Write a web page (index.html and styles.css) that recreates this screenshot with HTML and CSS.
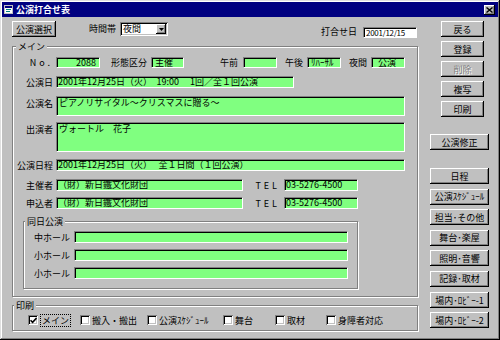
FILE: index.html
```html
<!DOCTYPE html>
<html lang="ja">
<head>
<meta charset="utf-8">
<title>公演打合せ表</title>
<link rel="stylesheet" href="styles.css">
</head>
<body>
<div class="window">
  <div class="titlebar">
    <svg class="title-icon" width="9" height="9" viewBox="0 0 9 9"><rect x="0.5" y="0.5" width="8" height="8" fill="#fff" stroke="#c0c0c0"/><rect x="1" y="1" width="7" height="2" fill="#000080"/><rect x="2" y="4" width="5" height="1" fill="#008080"/><rect x="2" y="6" width="4" height="1" fill="#008080"/></svg>
    <span class="title">公演打合せ表</span>
    <span class="close"><svg width="7" height="6" viewBox="0 0 7 6"><path d="M0.5 0.5L6.5 5.5M6.5 0.5L0.5 5.5" stroke="#000" stroke-width="1.4"/></svg></span>
  </div>
  <div class="client">
    <div class="left">
      <div class="toprow">
        <div class="btn btn-sel">公演選択</div>
        <span class="tlabel">時間帯</span>
        <div class="select"><span class="sel-text">夜間</span><span class="sel-btn"><svg width="5" height="3" viewBox="0 0 5 3"><path d="M0 0H5L2.5 3Z" fill="#000"/></svg></span></div>
        <span class="dlabel">打合せ日</span>
        <div class="datein">2001/12/15</div>
      </div>

      <fieldset class="group main">
        <legend>メイン</legend>
        <div class="row r-a">
          <span class="lab sp">No.</span>
          <div class="f w44 ar">2088</div>
          <span class="lab2 w51">形態区分</span>
          <div class="f w33 pl3">主催</div>
          <span class="lab2 w59">午前</span>
          <div class="f w34"></div>
          <span class="lab2 w30">午後</span>
          <div class="f w34 pl3">ﾘﾊｰｻﾙ</div>
          <span class="lab2 w30">夜間</span>
          <div class="f w34 pl6">公演</div>
        </div>
        <div class="row r-b">
          <span class="lab">公演日</span>
          <div class="f w238 h12">2001年12月25日（火）　19:00　 1回／全１回公演</div>
        </div>
        <div class="row top r-c">
          <span class="lab pt">公演名</span>
          <div class="f w349 h20 pl2">ピアノリサイタル～クリスマスに贈る～</div>
        </div>
        <div class="row top r-d">
          <span class="lab pt">出演者</span>
          <div class="f w349 h30 pl2">ヴォートル　花子</div>
        </div>
        <div class="row r-e">
          <span class="lab">公演日程</span>
          <div class="f w349 h12">2001年12月25日（火）　 全１日間（１回公演）</div>
        </div>
        <div class="row r-f">
          <span class="lab">主催者</span>
          <div class="f w187 h12">（財）新日鐵文化財団</div>
          <span class="lab2 w41 sp">TEL</span>
          <div class="f w74 h12">03-5276-4500</div>
        </div>
        <div class="row r-g">
          <span class="lab">申込者</span>
          <div class="f w187 h12">（財）新日鐵文化財団</div>
          <span class="lab2 w41 sp">TEL</span>
          <div class="f w74 h12">03-5276-4500</div>
        </div>

        <fieldset class="group same">
          <legend>同日公演</legend>
          <div class="hrow h1">
            <span class="hlab">中ホール</span>
            <div class="f w274 h12"></div>
          </div>
          <div class="hrow">
            <span class="hlab">小ホール</span>
            <div class="f w274 h12"></div>
          </div>
          <div class="hrow">
            <span class="hlab">小ホール</span>
            <div class="f w274 h12"></div>
          </div>
        </fieldset>
      </fieldset>

      <fieldset class="group print">
        <legend>印刷</legend>
        <div class="cbrow">
          <div class="cb"><span class="box"><svg width="7" height="7" viewBox="0 0 7 7"><path d="M0.5 3.2L2.6 5.4L6.5 1" fill="none" stroke="#000" stroke-width="1.6"/></svg></span><span class="focus">メイン</span></div>
          <div class="cb"><span class="box"></span><span>搬入・搬出</span></div>
          <div class="cb"><span class="box"></span><span>公演ｽｹｼﾞｭｰﾙ</span></div>
          <div class="cb"><span class="box"></span><span>舞台</span></div>
          <div class="cb"><span class="box"></span><span>取材</span></div>
          <div class="cb"><span class="box"></span><span>身障者対応</span></div>
        </div>
      </fieldset>
    </div>

    <div class="side">
      <div class="btn btn-n">戻る</div>
      <div class="btn btn-n g1">登録</div>
      <div class="btn btn-n g1 disabled">削除</div>
      <div class="btn btn-n g1">複写</div>
      <div class="btn btn-n g1">印刷</div>
      <div class="btn btn-w b-shusei">公演修正</div>
      <div class="btn btn-w b-nittei">日程</div>
      <div class="btn btn-w g2">公演ｽｹｼﾞｭｰﾙ</div>
      <div class="btn btn-w g2">担当･その他</div>
      <div class="btn btn-w g2">舞台･楽屋</div>
      <div class="btn btn-w g2">照明･音響</div>
      <div class="btn btn-w g2">記録･取材</div>
      <div class="btn btn-w b-lobby">場内･ﾛﾋﾞｰ-1</div>
      <div class="btn btn-w g1">場内･ﾛﾋﾞｰ-2</div>
    </div>
  </div>
</div>
</body>
</html>
```

FILE: styles.css
```css
* { box-sizing: border-box; }
html, body { margin: 0; padding: 0; }
body {
  width: 500px;
  height: 340px;
  overflow: hidden;
  background: #c0c0c0;
  font-family: "Noto Sans CJK JP", "Noto Sans", sans-serif;
  font-size: 9px;
  line-height: 11px;
  color: #000;
}
.window {
  width: 500px;
  height: 340px;
  padding: 2px;
  background: #c0c0c0;
  box-shadow: inset -1px -1px #000, inset 1px 1px #dfdfdf, inset -2px -2px #808080, inset 2px 2px #fff;
  display: flex;
  flex-direction: column;
}
.titlebar {
  height: 15px;
  flex-shrink: 0;
  background: #000080;
  color: #fff;
  display: flex;
  align-items: center;
  padding-left: 2px;
}
.title-icon { margin-right: 3px; }
.title { font-weight: bold; font-size: 9px; line-height: 11px; }
.close {
  margin-left: auto;
  margin-right: 3px;
  width: 11px;
  height: 10px;
  background: #c0c0c0;
  box-shadow: inset -1px -1px #000, inset 1px 1px #fff, inset -2px -2px #808080;
  display: flex;
  align-items: center;
  justify-content: center;
}
.client { flex: 1; display: flex; }
.left { margin-left: 10px; width: 406px; display: flex; flex-direction: column; }
.side { flex: 1; display: flex; flex-direction: column; align-items: flex-start; padding-top: 4px; }

/* buttons */
.btn {
  height: 16px;
  background: #c0c0c0;
  box-shadow: inset -1px -1px #000, inset 1px 1px #fff, inset -2px -2px #808080;
  display: flex;
  align-items: center;
  justify-content: center;
  white-space: nowrap;
  flex-shrink: 0;
}
.btn.disabled { color: #808080; text-shadow: 1px 1px #fff; }
.btn-sel { width: 44px; }
.btn-n { width: 43px; margin-left: 23px; }
.btn-w { width: 59px; margin-left: 12px; }
.g1 { margin-top: 4px; }
.b-shusei { margin-top: 17px; }
.b-nittei { margin-top: 18px; }
.g2 { margin-top: 4.5px; }
.b-lobby { margin-top: 5.5px; }

/* top row */
.toprow { display: flex; align-items: flex-start; height: 16px; margin-top: 4px; flex-shrink: 0; }
.tlabel { margin-left: 33px; margin-top: 2px; }
.select {
  margin-left: 4px;
  margin-top: 1px;
  width: 48px;
  height: 14px;
  background: #fff;
  box-shadow: inset 1px 1px #808080, inset -1px -1px #fff, inset 2px 2px #000, inset -2px -2px #c0c0c0;
  display: flex;
  align-items: center;
  padding: 2px;
}
.sel-text { flex: 1; padding-left: 1px; line-height: 10px; }
.sel-btn {
  width: 10px;
  height: 10px;
  background: #c0c0c0;
  box-shadow: inset -1px -1px #000, inset 1px 1px #fff, inset -2px -2px #808080;
  display: flex;
  align-items: center;
  justify-content: center;
}
.dlabel { margin-left: auto; margin-top: 5px; margin-right: 6px; }
.datein {
  margin-top: 6px;
  margin-right: 1px;
  width: 54px;
  height: 11px;
  background: #fff;
  border-top: 1px solid #808080;
  border-left: 1px solid #808080;
  border-bottom: 1px solid #fff;
  border-right: 1px solid #fff;
  box-shadow: inset 1px 1px #000;
  padding-left: 2px;
  font-size: 8px;
  letter-spacing: -0.3px;
  line-height: 9px;
  white-space: nowrap;
  overflow: hidden;
}

/* group boxes */
.group {
  margin: 0;
  padding: 0;
  min-width: 0;
  border: 1px solid #808080;
  box-shadow: inset 1px 1px #fff, 1px 1px #fff;
}
.group > legend {
  padding: 0 2px;
  line-height: 11px;
  background: #c0c0c0;
}
.main { margin-top: 4px; width: 406px; padding-bottom: 7px; }
.main > legend { margin-left: 3px; }
.same { margin-top: 7px; margin-left: 10px; width: 335px; padding-bottom: 9px; }
.same > legend { margin-left: 1px; }
.print { margin-top: 3px; width: 406px; padding-bottom: 4px; }
.print > legend { margin-left: 1px; }

/* rows */
.row { display: flex; align-items: center; }
.row.top { align-items: flex-start; }
.r-a { margin-top: 5px; }
.r-b { margin-top: 8px; }
.r-c { margin-top: 8px; }
.r-d { margin-top: 6px; }
.r-e { margin-top: 7px; }
.r-f { margin-top: 8px; }
.r-g { margin-top: 6px; }
.lab { width: 43px; padding-right: 3px; text-align: right; flex-shrink: 0; white-space: nowrap; }
.lab.pt { padding-top: 2px; }
.lab2 { text-align: right; padding-right: 4px; flex-shrink: 0; white-space: nowrap; }
.sp { letter-spacing: 3px; }
.w30 { width: 30px; }
.w41 { width: 41px; }
.w51 { width: 51px; }
.w59 { width: 59px; padding-right: 5px; }

/* green fields */
.f {
  height: 11px;
  background: #80ff80;
  border-top: 1px solid #808080;
  border-left: 1px solid #808080;
  border-bottom: 1px solid #fff;
  border-right: 1px solid #fff;
  box-shadow: inset 1px 1px #000;
  padding-left: 1px;
  line-height: 9px;
  white-space: nowrap;
  overflow: hidden;
  flex-shrink: 0;
}
.f.h12 { height: 12px; line-height: 10px; }
.f.h20 { height: 20px; padding-top: 1px; }
.f.h30 { height: 30px; padding-top: 1px; }
.f.ar { text-align: right; padding-right: 3px; }
.f.pl2 { padding-left: 2px; }
.f.pl3 { padding-left: 3px; }
.f.pl6 { padding-left: 6px; }
.w33 { width: 33px; }
.w34 { width: 34px; }
.w44 { width: 44px; }
.w74 { width: 74px; }
.w187 { width: 187px; }
.w238 { width: 238px; }
.w274 { width: 274px; }
.w349 { width: 349px; }

/* same-day halls */
.hrow { display: flex; align-items: center; margin-top: 6px; }
.hrow.h1 { margin-top: 4px; }
.hlab { width: 50px; padding-right: 4px; text-align: right; flex-shrink: 0; white-space: nowrap; }

/* checkboxes */
.cbrow {
  display: grid;
  grid-template-columns: 52px 67px 76px 52px 51px auto;
  padding-left: 15px;
  margin-top: 3px;
  height: 12px;
  align-items: center;
}
.cb { display: flex; align-items: center; white-space: nowrap; }
.box {
  width: 10px;
  height: 10px;
  margin-right: 2px;
  background: #fff;
  box-shadow: inset 1px 1px #808080, inset -1px -1px #fff, inset 2px 2px #000, inset -2px -2px #c0c0c0;
  display: flex;
  align-items: center;
  justify-content: center;
  flex-shrink: 0;
}
.box svg { margin-left: 1px; margin-top: 1px; }
.focus { outline: 1px dotted #000; outline-offset: 0; padding: 0 1px; margin-left: 1px; }
```
